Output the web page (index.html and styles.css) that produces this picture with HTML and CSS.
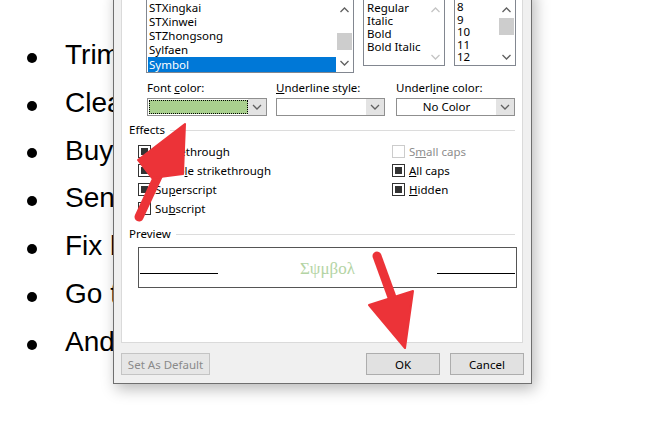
FILE: index.html
```html
<!DOCTYPE html>
<html>
<head>
<meta charset="utf-8">
<title>Font</title>
<link rel="stylesheet" href="styles.css">
</head>
<body>
<ul class="todo">
  <li><span class="dot"></span>Trim the hedges</li>
  <li><span class="dot"></span>Clean the garage</li>
  <li><span class="dot"></span>Buy groceries</li>
  <li><span class="dot"></span>Send the invoices</li>
  <li><span class="dot"></span>Fix bike tire</li>
  <li><span class="dot"></span>Go to the gym</li>
  <li><span class="dot"></span>And so on</li>
</ul>

<div class="dialog">
  <div class="panel">
    <div class="font-section">
      <div class="lists">
        <div class="listbox font-list">
          <div class="items items-bottom">
            <div class="item">STXingkai</div>
            <div class="item">STXinwei</div>
            <div class="item">STZhongsong</div>
            <div class="item">Sylfaen</div>
            <div class="item selected">Symbol</div>
          </div>
          <div class="scrollbar sb-font">
            <svg class="chev" viewBox="0 0 16 16"><polyline points="4,10 8,6 12,10"/></svg>
            <div class="track"><div class="thumb thumb-font"></div></div>
            <svg class="chev" viewBox="0 0 16 16"><polyline points="4,6 8,10 12,6"/></svg>
          </div>
        </div>
        <div class="listbox style-list">
          <div class="items items-top">
            <div class="item">Regular</div>
            <div class="item">Italic</div>
            <div class="item">Bold</div>
            <div class="item">Bold Italic</div>
          </div>
          <div class="scrollbar sb-small disabled">
            <svg class="chev" viewBox="0 0 16 16"><polyline points="4,10 8,6 12,10"/></svg>
            <div class="track"></div>
            <svg class="chev" viewBox="0 0 16 16"><polyline points="4,6 8,10 12,6"/></svg>
          </div>
        </div>
        <div class="listbox size-list">
          <div class="items items-size">
            <div class="item">8</div>
            <div class="item">9</div>
            <div class="item">10</div>
            <div class="item">11</div>
            <div class="item">12</div>
          </div>
          <div class="scrollbar sb-small">
            <svg class="chev" viewBox="0 0 16 16"><polyline points="4,10 8,6 12,10"/></svg>
            <div class="track"><div class="thumb"></div></div>
            <svg class="chev" viewBox="0 0 16 16"><polyline points="4,6 8,10 12,6"/></svg>
          </div>
        </div>
      </div>

      <div class="combos">
        <div class="field field-color">
          <div class="label">Font <u>c</u>olor:</div>
          <div class="combo">
            <div class="combo-value"><div class="swatch"></div></div>
            <div class="combo-btn"><svg class="chev" viewBox="0 0 16 16"><polyline points="4,6 8,10 12,6"/></svg></div>
          </div>
        </div>
        <div class="field field-ustyle">
          <div class="label"><u>U</u>nderline style:</div>
          <div class="combo">
            <div class="combo-value"></div>
            <div class="combo-btn"><svg class="chev" viewBox="0 0 16 16"><polyline points="4,6 8,10 12,6"/></svg></div>
          </div>
        </div>
        <div class="field field-ucolor">
          <div class="label">Underl<u>i</u>ne color:</div>
          <div class="combo">
            <div class="combo-value centered">No Color</div>
            <div class="combo-btn"><svg class="chev" viewBox="0 0 16 16"><polyline points="4,6 8,10 12,6"/></svg></div>
          </div>
        </div>
      </div>
    </div>

    <div class="group-head"><span>Effects</span><span class="rule"></span></div>
    <div class="effects">
      <div class="check"><span class="box on"></span><span>Stri<u>k</u>ethrough</span></div>
      <div class="check off-state"><span class="box"></span><span>S<u>m</u>all caps</span></div>
      <div class="check"><span class="box on"></span><span>Doub<u>l</u>e strikethrough</span></div>
      <div class="check"><span class="box on"></span><span><u>A</u>ll caps</span></div>
      <div class="check"><span class="box on"></span><span>Su<u>p</u>erscript</span></div>
      <div class="check"><span class="box on"></span><span><u>H</u>idden</span></div>
      <div class="check"><span class="box"></span><span>Su<u>b</u>script</span></div>
    </div>

    <div class="group-head preview-head"><span>Preview</span><span class="rule"></span></div>
    <div class="preview">
      <span class="pline"></span>
      <span class="ptext">Σψμβολ</span>
      <span class="pline"></span>
    </div>
  </div>

  <div class="buttons">
    <button class="btn btn-default">Set As Default</button>
    <span class="spacer"></span>
    <button class="btn btn-ok">OK</button>
    <button class="btn btn-cancel">Cancel</button>
  </div>
</div>

<svg class="arrows" width="672" height="445" viewBox="0 0 672 445">
  <g fill="#ec3338" stroke="#ec3338" stroke-linejoin="round">
    <line x1="160" y1="172" x2="139" y2="217" stroke-width="9" stroke-linecap="round"/>
    <polygon points="185,124 138,160 152,178 183,174" stroke-width="2"/>
    <line x1="377" y1="256" x2="393" y2="300" stroke-width="9" stroke-linecap="round"/>
    <polygon points="369,305 413,291 405,348" stroke-width="2"/>
  </g>
</svg>
</body>
</html>
```
FILE: styles.css
```css
* { box-sizing: border-box; }
html, body { margin: 0; padding: 0; }
body {
  width: 672px;
  height: 445px;
  overflow: hidden;
  background: #fff;
  position: relative;
  font-family: "Liberation Sans", Arial, sans-serif;
}

/* background document */
.todo {
  list-style: none;
  margin: 31px 0 0 0;
  padding: 0 0 0 27px;
}
.todo li {
  display: flex;
  align-items: center;
  height: 47.8px;
  font-size: 28px;
  line-height: 47.8px;
  color: #000;
  white-space: nowrap;
}
.dot {
  flex: none;
  width: 10px;
  height: 10px;
  border-radius: 50%;
  background: #000;
  margin: 6px 28px 0 0;
}

/* dialog */
.dialog {
  position: absolute;
  left: 113px;
  top: -12px;
  width: 419px;
  height: 396px;
  background: #f0f0f0;
  border: 1px solid #6f6f6f;
  box-shadow: 3px 5px 14px rgba(0, 0, 0, 0.28);
  padding: 7px 8px 8px 7px;
  display: flex;
  flex-direction: column;
  font-family: "Noto Sans", sans-serif;
  font-size: 11.5px;
  color: #000;
}
.panel {
  flex: none;
  height: 347px;
  background: #fff;
  border: 1px solid #dadada;
}

.font-section { padding: 2px 0 0 24px; }
.lists { display: flex; align-items: flex-start; }
.listbox {
  display: flex;
  border: 1px solid #828790;
  background: #fff;
  overflow: hidden;
}
.font-list { width: 208px; height: 74px; margin-right: 9px; }
.style-list { width: 82px; height: 67px; margin-right: 9px; }
.size-list { width: 62px; height: 67px; }

.items {
  flex: 1;
  min-width: 0;
  display: flex;
  flex-direction: column;
  overflow: hidden;
  white-space: nowrap;
}
.items-bottom { justify-content: flex-end; padding-left: 1px; }
.items-top { padding-top: 1px; }
.items-size { padding-top: 1px; }
.font-list .item { height: 14px; line-height: 14px; padding-left: 1px; flex: none; }
.font-list .item.selected { height: 15px; line-height: 15px; background: #0078d7; color: #fff; }
.style-list .item { height: 13px; line-height: 13px; flex: none; padding-left: 3px; }
.size-list .item { height: 12.6px; line-height: 12.6px; flex: none; padding-left: 2px; }

.scrollbar {
  flex: none;
  width: 17px;
  display: flex;
  flex-direction: column;
  padding-top: 2px;
}
.sb-font { padding-bottom: 1px; }
.scrollbar .chev { width: 17px; height: 16px; flex: none; }
.chev polyline { fill: none; stroke: #606060; stroke-width: 1.3; }
.scrollbar.disabled .chev polyline { stroke: #c4c4c4; }
.track { flex: 1; padding: 0 1px; }
.thumb { height: 17px; background: #cdcdcd; }
.thumb-font { margin-top: 15px; }

/* combos */
.combos { display: flex; padding-left: 1px; margin-top: 7px; }
.field { display: flex; flex-direction: column; }
.field-color { width: 120px; margin-right: 9px; }
.field-ustyle { width: 109px; margin-right: 11px; }
.field-ucolor { width: 119px; }
.label { height: 16px; line-height: 16px; white-space: nowrap; }
.combo {
  margin-top: 2px;
  height: 18px;
  border: 1px solid #8f8f8f;
  background: #fff;
  display: flex;
}
.combo-value { flex: 1; display: flex; line-height: 16px; }
.combo-value.centered { justify-content: center; }
.swatch {
  flex: 1;
  margin: 1px 0 1px 1px;
  border: 1px dotted #000;
  background: #a9d08e;
}
.combo-btn {
  width: 18px;
  flex: none;
  background: #e3e3e3;
  display: flex;
  align-items: center;
  justify-content: center;
}
.combo-btn .chev { width: 16px; height: 16px; }

/* group headers */
.group-head {
  display: flex;
  align-items: center;
  height: 16px;
  line-height: 16px;
  padding: 0 7px;
  margin-top: 6px;
}
.group-head .rule { flex: 1; height: 1px; background: #dcdcdc; margin-left: 5px; }
.preview-head { margin-top: 8px; }

/* effects */
.effects {
  display: grid;
  grid-template-columns: 254px 1fr;
  grid-auto-rows: 19px;
  padding-left: 16px;
  margin-top: 4px;
}
.check { display: flex; align-items: center; white-space: nowrap; }
.box {
  flex: none;
  width: 13px;
  height: 13px;
  border: 1px solid #333;
  background: #fff;
  margin-right: 4px;
  display: flex;
  align-items: center;
  justify-content: center;
}
.box.on::after {
  content: "";
  width: 7px;
  height: 7px;
  background: #333;
}
.off-state { color: #8d8d8d; }
.off-state .box { border-color: #cccccc; }

/* preview */
.preview {
  margin: 5px 0 0 16px;
  width: 379px;
  height: 41px;
  border: 1px solid #555;
  padding: 12px 1px 0 1px;
  display: flex;
  align-items: baseline;
  justify-content: space-between;
}
.pline { width: 78px; height: 1px; background: #000; display: block; }
.ptext {
  font-family: "Liberation Serif", "DejaVu Serif", serif;
  font-size: 17px;
  line-height: 17px;
  color: #b4d4a4;
}

/* buttons */
.buttons {
  display: flex;
  gap: 10px;
  margin-top: 10px;
  margin-right: -1px;
  height: 22px;
}
.spacer { flex: 1; }
.btn {
  height: 22px;
  padding: 0;
  border: 1px solid #adadad;
  background: #e1e1e1;
  color: #000;
  font: inherit;
}
.btn-default { width: 89px; color: #8a8a8a; border-color: #c4c4c4; background: #e6e6e6; }
.btn-ok, .btn-cancel { width: 74px; }

/* annotation arrows */
.arrows { position: absolute; left: 0; top: 0; pointer-events: none; }
```
